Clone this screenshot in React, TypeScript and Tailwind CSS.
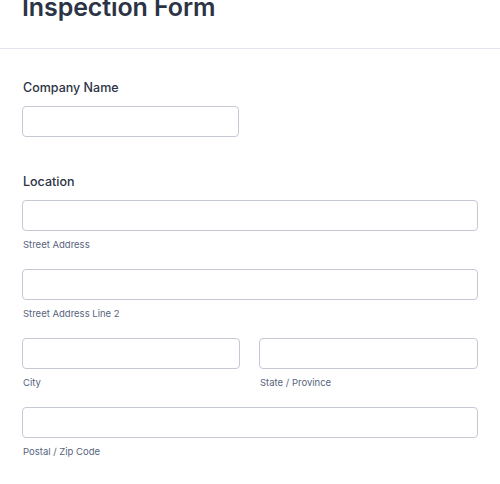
const font = { fontFamily: 'Inter, "Noto Sans", sans-serif' }

function Field({ sub, className = '' }: { sub?: string; className?: string }) {
  return (
    <div className={className}>
      <div className="h-[31px] rounded-[4px] border border-[#c5c9d6] bg-white" />
      {sub && (
        <div className="ml-px mt-[7px] text-[9.5px] leading-[14px] text-[#57647e]">{sub}</div>
      )}
    </div>
  )
}

export default function App() {
  return (
    <div className="h-[484px] w-[500px] overflow-hidden bg-white" style={font}>
      <div className="mt-[-7px] border-b border-[#e3e3ee] px-[22px] pb-[27px]">
        <h1 className="text-[25px] font-semibold leading-[28px] tracking-[-0.1px] text-[#2c3345]">
          Inspection Form
        </h1>
      </div>

      <div className="px-[22px]">
        <div className="mt-[29px]">
          <div className="ml-px mb-[8px] text-[12.5px] font-medium leading-[20px] text-[#2c3345]">
            Company Name
          </div>
          <Field className="w-[217px]" />
        </div>

        <div className="mt-[35px]">
          <div className="ml-px mb-[8px] text-[12.5px] font-medium leading-[20px] text-[#2c3345]">
            Location
          </div>
          <div className="flex flex-col gap-[17px]">
            <Field sub="Street Address" />
            <Field sub="Street Address Line 2" />
            <div className="grid grid-cols-[218px_1fr] gap-[19px]">
              <Field sub="City" />
              <Field sub="State / Province" />
            </div>
            <Field sub="Postal / Zip Code" />
          </div>
        </div>
      </div>
    </div>
  )
}
